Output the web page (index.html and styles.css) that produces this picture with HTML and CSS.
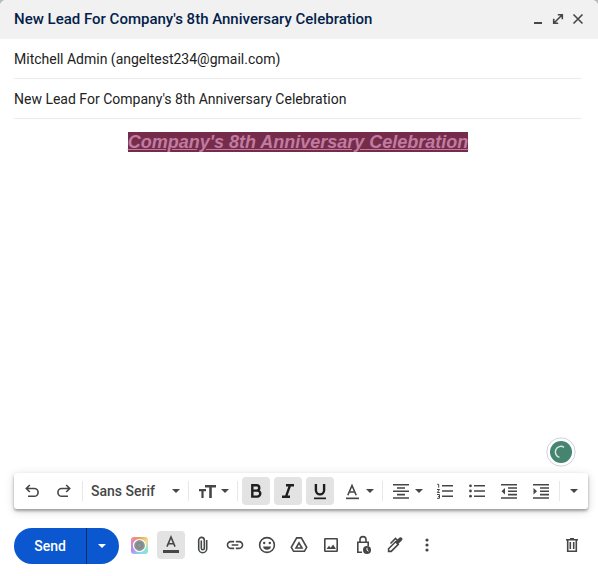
FILE: index.html
```html
<!DOCTYPE html>
<html lang="en">
<head>
<meta charset="utf-8">
<meta name="viewport" content="width=device-width, initial-scale=1">
<title>New message</title>
<link rel="stylesheet" href="styles.css">
</head>
<body>
<main class="compose">
  <header class="head">
    <h1 class="title">New Lead For Company's 8th Anniversary Celebration</h1>
    <button class="win" aria-label="Minimize"><svg viewBox="0 0 20 20"><path d="M6 13h8v2H6z"/></svg></button>
    <button class="win" aria-label="Full screen"><svg viewBox="0 0 20 20"><path class="line" d="M9.800 5.800h4.500v4.500M14 6l-8 8M5.700 9.800v4.500h4.500"/></svg></button>
    <button class="win" aria-label="Close"><svg viewBox="0 0 20 20"><path class="line" d="M5.500 5.500l9 9M14.500 5.500l-9 9"/></svg></button>
  </header>

  <div class="fields">
    <input class="field" aria-label="To" value="Mitchell Admin (angeltest234@gmail.com)">
    <input class="field" aria-label="Subject" value="New Lead For Company's 8th Anniversary Celebration">
  </div>

  <section class="editor">
    <div class="text" contenteditable="true" role="textbox" aria-label="Message body" spellcheck="false"><span class="banner">Company's 8th Anniversary Celebration</span></div>
    <button class="assistant" aria-label="Writing assistant"><svg viewBox="0 0 30 30"><circle cx="15" cy="15" r="14.200" fill="#fff" stroke="#cfd2e0"/><circle cx="15" cy="15" r="11" fill="#45856f"/><path d="M18 10.300A5.600 5.600 0 1 0 13.500 20.400" fill="none" stroke="#d5e8df" stroke-width="1.500"/></svg></button>
  </section>

  <div class="format" role="toolbar" aria-label="Formatting">
    <button class="tool" aria-label="Undo"><svg viewBox="0 0 20 20"><path class="line" d="M7.800 4L4.300 7.500l3.500 3.500M4.500 7.500h7.700a3.900 3.900 0 0 1 0 7.800H6"/></svg></button>
    <button class="tool" aria-label="Redo"><svg viewBox="0 0 20 20"><path class="line" d="M12.200 4l3.500 3.500-3.500 3.500M15.500 7.500H7.800a3.900 3.900 0 0 0 0 7.800H14"/></svg></button>
    <span class="sep"></span>
    <label class="font">
      <select aria-label="Font"><option>Sans Serif</option></select>
      <svg class="caret" viewBox="0 0 8 4"><path d="M0 0h8L4 4z"/></svg>
    </label>
    <span class="sep"></span>
    <button class="tool wide" aria-label="Size"><svg viewBox="0 0 20 20"><path d="M8 4h11v2.400h-4.200V17h-2.600V6.400H8zM2 8h7v2.200H6.600V17H4.400v-6.800H2z"/></svg><svg class="caret" viewBox="0 0 8 4"><path d="M0 0h8L4 4z"/></svg></button>
    <span class="sep"></span>
    <button class="tool on" aria-label="Bold" aria-pressed="true"><svg viewBox="0 0 20 20"><path class="line bold" d="M6.300 4.300h4.300a2.600 2.600 0 0 1 0 5.300H6.300zM6.300 9.600h5a3 3 0 0 1 0 6h-5z"/></svg></button>
    <button class="tool on" aria-label="Italic" aria-pressed="true"><svg viewBox="0 0 20 20"><path class="line bold" d="M8 4.300h8M4 15.700h8M12 4.300L8 15.700"/></svg></button>
    <button class="tool on" aria-label="Underline" aria-pressed="true"><svg viewBox="0 0 20 20"><path class="line bold" d="M5.900 3v6.300a4.100 4.100 0 0 0 8.200 0V3"/><path d="M4 16.500h12v1.700H4z"/></svg></button>
    <button class="tool wide" aria-label="Text color"><svg viewBox="0 0 20 20"><path class="line" d="M5.800 14.300L10 4.500l4.200 9.800M7.200 11h5.600"/><path d="M4 16.500h13v1.700H4z"/></svg><svg class="caret" viewBox="0 0 8 4"><path d="M0 0h8L4 4z"/></svg></button>
    <span class="sep"></span>
    <button class="tool wide" aria-label="Align"><svg viewBox="0 0 20 20"><path d="M2 3h16v1.600H2zM6 6.200h8v1.600H6zM2 9.500h16v1.600H2zM6 12.800h8v1.600H6zM2 16.200h16v1.600H2z"/></svg><svg class="caret" viewBox="0 0 8 4"><path d="M0 0h8L4 4z"/></svg></button>
    <button class="tool" aria-label="Numbered list"><svg viewBox="0 0 20 20"><path d="M7 4h11v1.600H7zM7 9.200h11v1.600H7zM7 14.400h11V16H7z"/><path class="line thin" d="M2.200 3.300h1.500v3.400M2 8.500h2.500L2.300 11.500h2.500M2 13.500h2.500v3.800H2M3 15.400h1.500"/></svg></button>
    <button class="tool" aria-label="Bulleted list"><svg viewBox="0 0 20 20"><path d="M7 4h11v1.600H7zM7 9.200h11v1.600H7zM7 14.400h11V16H7z"/><circle cx="3.500" cy="4.800" r="1.400"/><circle cx="3.500" cy="10" r="1.400"/><circle cx="3.500" cy="15.200" r="1.400"/></svg></button>
    <button class="tool" aria-label="Indent less"><svg viewBox="0 0 20 20"><path d="M2 3h16v1.600H2zM9 6.200h9v1.600H9zM9 9.500h9v1.600H9zM9 12.800h9v1.600H9zM2 16.200h16v1.600H2zM6 7v6.400L2.500 10.200z"/></svg></button>
    <button class="tool" aria-label="Indent more"><svg viewBox="0 0 20 20"><path d="M2 3h16v1.600H2zM9 6.200h9v1.600H9zM9 9.500h9v1.600H9zM9 12.800h9v1.600H9zM2 16.200h16v1.600H2zM2.500 7v6.400L6 10.200z"/></svg></button>
    <span class="sep"></span>
    <button class="tool more" aria-label="More formatting"><svg class="caret" viewBox="0 0 8 4"><path d="M0 0h8L4 4z"/></svg></button>
  </div>

  <footer class="actions">
    <div class="send">
      <button class="send-main">Send</button>
      <button class="send-more" aria-label="More send options"><svg class="caret" viewBox="0 0 8 4"><path d="M0 0h8L4 4z"/></svg></button>
    </div>
    <button class="tool" aria-label="Color assistant"><span class="swatch"><svg viewBox="0 0 17 17"><circle cx="8.500" cy="8.500" r="6" fill="#8d9496" stroke="#fff" stroke-width="1.200"/><circle cx="8.500" cy="8.500" r="2.800" fill="none" stroke="#788084"/></svg></span></button>
    <button class="tool on" aria-label="Formatting options" aria-pressed="true"><svg class="dark" viewBox="0 0 20 20"><path class="line" d="M6 11.600L10 2l4 9.600M7.300 8.700h5.400"/><path d="M2 15h16v3H2z"/></svg></button>
    <button class="tool" aria-label="Attach files"><svg viewBox="0 0 20 20"><path class="line" d="M13.700 5v8.700a4 4 0 0 1-8 0V5.200a2.800 2.800 0 0 1 5.600 0v8a1.500 1.500 0 0 1-3 0V5.500"/></svg></button>
    <button class="tool" aria-label="Insert link"><svg viewBox="0 0 24 24"><path d="M3.900 12c0-1.710 1.390-3.100 3.100-3.100h4V7H7c-2.760 0-5 2.240-5 5s2.240 5 5 5h4v-1.900H7c-1.710 0-3.100-1.390-3.100-3.100zM8 13h8v-2H8v2zm9-6h-4v1.900h4c1.710 0 3.100 1.390 3.100 3.100s-1.390 3.100-3.100 3.100h-4V17h4c2.760 0 5-2.240 5-5s-2.240-5-5-5z"/></svg></button>
    <button class="tool" aria-label="Insert emoji"><svg viewBox="0 0 20 20"><circle class="line" cx="10" cy="10" r="7.400"/><circle cx="7.200" cy="8" r="1.200"/><circle cx="12.800" cy="8" r="1.200"/><path d="M6 11.500h8a4.100 4.100 0 0 1-8 0z"/></svg></button>
    <button class="tool" aria-label="Insert from Drive"><svg viewBox="0 0 20 20"><path class="line" d="M7.700 2.900h4.600l5.400 9.400-2.300 4H4.600l-2.300-4z"/><path class="line" d="M10 7.800l3 5.200H7z"/></svg></button>
    <button class="tool" aria-label="Insert photo"><svg viewBox="0 0 20 20"><rect class="line" x="3.800" y="3.800" width="12.400" height="12.400" rx="0.500"/><path d="M5.500 14l2.500-3.300 1.700 2 2.400-3.200 2.900 4.500z"/></svg></button>
    <button class="tool" aria-label="Confidential mode"><svg viewBox="0 0 20 20"><path class="line" d="M9 17.200H4.800V7.300h10.400V11M7 7V4.600a3 3 0 0 1 6 0V7"/><circle cx="14" cy="15" r="4"/><path d="M14 12.800v2.400l1.500 1" fill="none" stroke="#fff"/></svg></button>
    <button class="tool" aria-label="Insert signature"><svg viewBox="0 0 20 20"><path class="line" d="M3.600 16.400v-2.600l7-7 2.600 2.600-7 7zM5.500 8.500l5-5 2 2"/><path d="M10.500 6.500l3.700-3.700c.9-.9 2-.8 2.700-.1.700.7.800 1.900-.1 2.800l-4 4z"/></svg></button>
    <button class="tool" aria-label="More options"><svg viewBox="0 0 20 20"><circle cx="10" cy="5" r="1.600"/><circle cx="10" cy="10" r="1.600"/><circle cx="10" cy="15" r="1.600"/></svg></button>
    <button class="tool discard" aria-label="Discard draft"><svg viewBox="0 0 20 20"><path d="M8 3h4v1h4v1.600H4V4h4z"/><path class="line" d="M5.700 5v11.200h8.600V5"/><path d="M7.500 7h1.600v7H7.500zM10.900 7h1.600v7h-1.600z"/></svg></button>
  </footer>
</main>
</body>
</html>
```
FILE: styles.css
```css
* { box-sizing: border-box; }

body {
  margin: 0;
  background: #b9b9bd;
  font-family: Roboto, "Liberation Sans", sans-serif;
  font-size: 14px;
  color: #222;
}

button, input, select {
  font: inherit;
  color: inherit;
  border: 0;
  padding: 0;
  margin: 0;
  background: none;
}

svg {
  display: block;
  flex: none;
  width: 20px;
  height: 20px;
  fill: #444746;
}

.line {
  fill: none;
  stroke: #444746;
  stroke-width: 1.6;
}

.thin { stroke-width: 1; }

.compose {
  display: flex;
  flex-direction: column;
  min-height: 100vh;
  background: #fff;
  border-radius: 6px 6px 0 0;
  overflow: hidden;
}

.head {
  display: flex;
  align-items: center;
  height: 39px;
  padding: 0 10px 1px 14px;
  background: #f1f1f1;
}

.title {
  flex: 1;
  margin: 0;
  font-size: 15px;
  font-weight: 500;
  line-height: 20px;
  color: #041e49;
}

.win { width: 20px; height: 20px; }

.fields { padding: 0 16px 0 14px; }

.field {
  display: block;
  width: 100%;
  height: 40px;
  border-bottom: 1px solid #ececec;
  outline: 0;
}

.editor {
  position: relative;
  flex: 1;
  padding: 12px 16px 0 14px;
}

.text {
  min-height: 100%;
  font-family: "Liberation Sans", Arial, sans-serif;
  font-size: 18px;
  line-height: 23px;
  text-align: center;
  outline: 0;
}

.banner {
  background: #742c4a;
  color: #c27ba0;
  font-weight: 700;
  font-style: italic;
  text-decoration: underline;
}

.assistant {
  position: absolute;
  right: 22px;
  bottom: 6px;
}

.assistant svg { width: 30px; height: 30px; }

.format {
  display: flex;
  align-items: center;
  gap: 4px;
  height: 36px;
  margin: 0 10px 19px 14px;
  padding: 0 4px;
  background: #fff;
  border-radius: 3px;
  box-shadow: 0 2px 3px rgba(0, 0, 0, .32), 0 2px 10px rgba(0, 0, 0, .16);
}

.tool {
  display: flex;
  flex: none;
  align-items: center;
  justify-content: center;
  width: 28px;
  height: 28px;
  border-radius: 4px;
}

.wide {
  width: 40px;
  gap: 4px;
}

.more { width: 20px; }

.on { background: #e3e3e3; }
.on svg { fill: #1f1f1f; }
.on .line { stroke: #1f1f1f; }
.on .bold { stroke-width: 2.4; }
.on .dark { fill: #444746; }
.on .dark .line { stroke: #444746; }

.sep {
  width: 1px;
  height: 20px;
  background: #e8e8e8;
}

.caret {
  width: 8px;
  height: 4px;
}

.font {
  display: flex;
  flex: 1;
  align-items: center;
  padding: 0 4px;
  color: #444746;
  font-weight: 500;
}

.font select {
  flex: 1;
  min-width: 0;
  appearance: none;
}

.actions {
  display: flex;
  align-items: center;
  gap: 4px;
  padding: 0 12px 12px 14px;
}

.actions .tool { margin-bottom: 2px; }

.send {
  display: flex;
  height: 36px;
  margin-right: 2px;
  border-radius: 18px;
  overflow: hidden;
  background: #0b57d0;
  color: #fff;
}

.send-main {
  width: 72px;
  font-weight: 500;
}

.send-more {
  display: flex;
  align-items: center;
  justify-content: center;
  width: 33px;
  padding-right: 2px;
  border-left: 1px solid #062e6f;
}

.send-more svg { fill: #fff; }

.swatch {
  width: 17px;
  height: 17px;
  border-radius: 3px;
  background: conic-gradient(#e6a04e, #f3dd8c, #87e6d2, #88d8f2, #b58df0, #ef84bf, #e6a04e);
}

.swatch svg { width: 17px; height: 17px; }

.actions .discard { margin-left: auto; }
```
